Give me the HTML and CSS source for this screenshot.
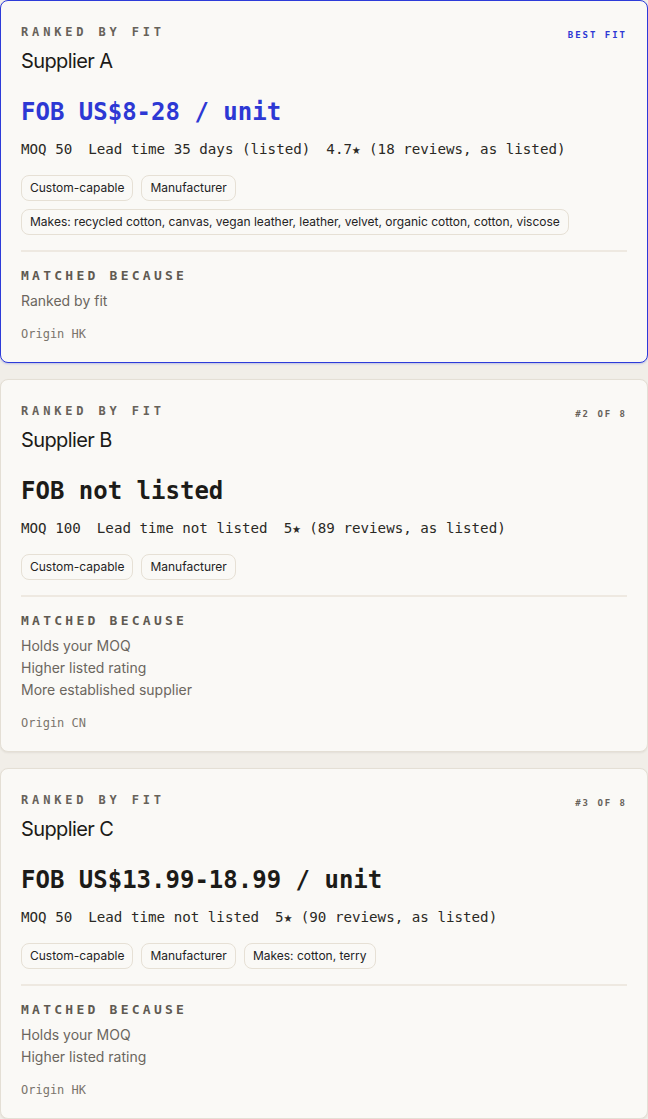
FILE: index.html
```html
<!DOCTYPE html>
<html lang="en">
<head>
    <meta charset="UTF-8">
    <meta name="viewport" content="width=device-width, initial-scale=1.0">
    <title>Ranked suppliers</title>
    <link rel="stylesheet" href="styles.css">
</head>
<body>
    <div class="list">
        <div class="card best">
            <div class="card-head">
                <div>
                    <div class="eyebrow">Ranked by fit</div>
                    <h2 class="name">Supplier A</h2>
                </div>
                <div class="rank">Best fit</div>
            </div>
            <div class="price">FOB US$8-28 / unit</div>
            <div class="meta">
                <span>MOQ 50</span>
                <span>Lead time 35 days (listed)</span>
                <span>4.7★ (18 reviews, as listed)</span>
            </div>
            <div class="tags">
                <span class="tag">Custom-capable</span>
                <span class="tag">Manufacturer</span>
                <span class="tag">Makes: recycled cotton, canvas, vegan leather, leather, velvet, organic cotton, cotton, viscose</span>
            </div>
            <div class="why">
                <div class="eyebrow">Matched because</div>
                <ul class="reasons">
                    <li>Ranked by fit</li>
                </ul>
                <div class="origin">Origin HK</div>
            </div>
        </div>

        <div class="card">
            <div class="card-head">
                <div>
                    <div class="eyebrow">Ranked by fit</div>
                    <h2 class="name">Supplier B</h2>
                </div>
                <div class="rank">#2 of 8</div>
            </div>
            <div class="price">FOB not listed</div>
            <div class="meta">
                <span>MOQ 100</span>
                <span>Lead time not listed</span>
                <span>5★ (89 reviews, as listed)</span>
            </div>
            <div class="tags">
                <span class="tag">Custom-capable</span>
                <span class="tag">Manufacturer</span>
            </div>
            <div class="why">
                <div class="eyebrow">Matched because</div>
                <ul class="reasons">
                    <li>Holds your MOQ</li>
                    <li>Higher listed rating</li>
                    <li>More established supplier</li>
                </ul>
                <div class="origin">Origin CN</div>
            </div>
        </div>

        <div class="card">
            <div class="card-head">
                <div>
                    <div class="eyebrow">Ranked by fit</div>
                    <h2 class="name">Supplier C</h2>
                </div>
                <div class="rank">#3 of 8</div>
            </div>
            <div class="price">FOB US$13.99-18.99 / unit</div>
            <div class="meta">
                <span>MOQ 50</span>
                <span>Lead time not listed</span>
                <span>5★ (90 reviews, as listed)</span>
            </div>
            <div class="tags">
                <span class="tag">Custom-capable</span>
                <span class="tag">Manufacturer</span>
                <span class="tag">Makes: cotton, terry</span>
            </div>
            <div class="why">
                <div class="eyebrow">Matched because</div>
                <ul class="reasons">
                    <li>Holds your MOQ</li>
                    <li>Higher listed rating</li>
                </ul>
                <div class="origin">Origin HK</div>
            </div>
        </div>
    </div>
</body>
</html>
```

FILE: styles.css
```css
body {
    margin: 0;
    background-color: #f1eee8;
    font-family: Inter, "Noto Sans", sans-serif;
    color: #1c1b18;
}
.list {
    display: flex;
    flex-direction: column;
    gap: 16px;
}
.card {
    background: #faf9f6;
    border: 1px solid #e4dfd5;
    border-radius: 8px;
    padding: 23px 20px 20px;
    box-shadow: 0 1px 2px rgba(60, 50, 30, 0.08);
}
.card.best {
    border-color: #2d3bd9;
    box-shadow: 0 1px 2px rgba(45, 59, 217, 0.25);
}
.card-head {
    display: flex;
    justify-content: space-between;
    align-items: flex-start;
}
.eyebrow {
    font-family: "DejaVu Sans Mono", monospace;
    font-weight: bold;
    font-size: 12px;
    line-height: 16px;
    letter-spacing: 0.32em;
    text-transform: uppercase;
    color: #67625a;
}
.name {
    margin: 7px 0 0;
    font-size: 20px;
    font-weight: 400;
    letter-spacing: -0.03em;
    line-height: 28px;
}
.rank {
    font-family: "DejaVu Sans Mono", monospace;
    font-weight: bold;
    font-size: 9px;
    letter-spacing: 0.22em;
    text-transform: uppercase;
    color: #67625a;
    margin-top: 6px;
}
.best .rank,
.best .price {
    color: #2d38d4;
}
.price {
    margin-top: 22px;
    font-family: "DejaVu Sans Mono", monospace;
    font-weight: bold;
    font-size: 24px;
    line-height: 30px;
}
.meta {
    margin-top: 12px;
    display: flex;
    flex-wrap: wrap;
    gap: 0 16px;
    font-family: "DejaVu Sans Mono", monospace;
    font-size: 14.2px;
    line-height: 20px;
    color: #2a2925;
}
.tags {
    margin-top: 16px;
    display: flex;
    flex-wrap: wrap;
    gap: 8px;
}
.tag {
    font-size: 12px;
    line-height: 16px;
    padding: 4px 8px;
    border: 1px solid #e6e0d5;
    border-radius: 8px;
    color: #24231f;
}
.why {
    margin-top: 15px;
    border-top: 2px solid #eee9e1;
    padding-top: 16px;
}
.why .eyebrow {
    font-size: 13px;
    letter-spacing: 0.25em;
    color: #5f5a52;
}
.reasons {
    list-style: none;
    margin: 6px 0 0;
    padding: 0;
    font-size: 14px;
    line-height: 22px;
    color: #6b665e;
}
.origin {
    margin-top: 14px;
    font-family: "DejaVu Sans Mono", monospace;
    font-size: 12px;
    line-height: 16px;
    color: #7a756c;
}
```
